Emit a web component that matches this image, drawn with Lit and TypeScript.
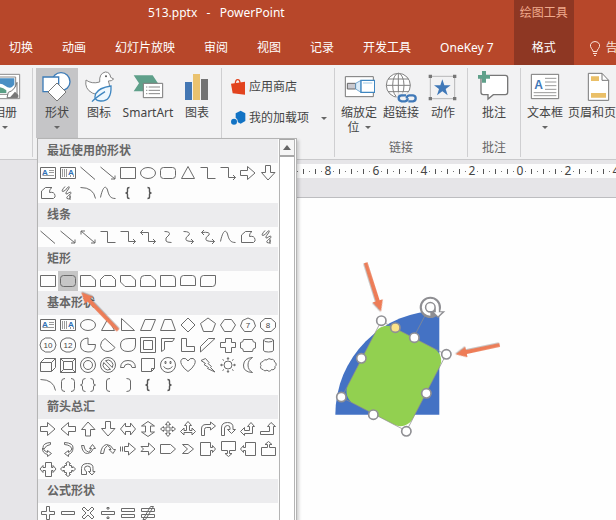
import { LitElement, html, css, svg, nothing } from "lit";
import type { TemplateResult, SVGTemplateResult } from "lit";
import { customElement } from "lit/decorators.js";
import { classMap } from "lit/directives/class-map.js";

type Glyph = string | SVGTemplateResult;
type Shape = [name: string, glyph: Glyph];

/* ---------- gallery glyphs, each drawn in a 20 x 20 cell ---------- */

const polygonText = (label: string, outline: string) => svg`
  <path d=${outline}></path>
  <text class="num" x="10" y="13" text-anchor="middle">${label}</text>`;

const textBox: Shape = ["文本框", svg`<path d="M2.5 4.5h15v11h-15z"></path>
  <path class="thin" d="M11 7.5h5M11 9.5h5M4.5 12.5h11.5"></path>
  <text class="letter" x="4" y="11.5">A</text>`];
const verticalTextBox: Shape = ["竖排文本框", svg`<path d="M2.5 4.5h15v11h-15z"></path>
  <path class="thin" d="M4.5 6v8M6.5 6v8M8.5 6v8M12.5 12v2M15.5 12v2"></path>
  <text class="letter" x="10" y="11.5">A</text>`];
const line: Shape = ["直线", "M2.5 4L17 16.5"];
const lineArrow: Shape = ["箭头", "M2.5 4L17 16M17 12.5V16H13"];
const lineDouble: Shape = ["双箭头", "M3 4L17 16M17 12.5V16H13M3 7.5V4H7"];
const rect: Shape = ["矩形", "M2.5 4.5h15v11h-15z"];
const ellipse: Shape = ["椭圆", "M10 4.5a7.5 5.5 0 1 1 0 11a7.5 5.5 0 1 1 0-11z"];
const roundRect: Shape = ["圆角矩形", "M5.5 4.5h9q3 0 3 3v5q0 3-3 3h-9q-3 0-3-3v-5q0-3 3-3z"];
const triangle: Shape = ["三角形", "M10 3.5L16.5 15.5H3.5z"];
const elbow: Shape = ["肘形连接符", "M2.5 4.5H9.5V15.5H17.5"];
const elbowArrow: Shape = ["肘形箭头连接符", "M2.5 4.5H10.5V14.5H17.5M15 12l2.5 2.5-2.5 2.5"];
const elbowDouble: Shape = ["肘形双箭头连接符", "M2.5 5.5H10.5V14.5H17.5M15 12l2.5 2.5-2.5 2.5M5 3L2.5 5.5 5 8"];
const rightArrow: Shape = ["右箭头", "M2.5 7.5H9.5V3.5L17 10 9.5 16.5V12.5H2.5z"];
const downArrow: Shape = ["下箭头", "M7.5 2.5V9.5H3.5L10 17 17 9.5H12.5V2.5z"];
const freeform: Shape = ["任意多边形", "M3.5 15.5V8L7.5 4.5H14Q11 6 11.5 9.5Q16.5 8.5 17 12.5V14L15.5 15.5z"];
const scribble: Shape = ["自由曲线", "M7 3.5Q2.5 8.5 5 8.5Q7.5 8 9.5 4.5Q12.5 2.5 10.5 6Q6 11.5 9 11Q13.5 7.5 13 10.5Q7.5 14.5 9 15.5Q13 17 12 12.5L12 17"];
const arc: Shape = ["弧形", "M2.5 4.5Q15.5 4.5 17.5 15.5"];
const curve: Shape = ["曲线", "M2.5 14.5C5 2.5 8 2.5 9.5 7C11 13 12.5 15.5 17.5 15.5"];
const leftBrace: Shape = ["左大括号", svg`<path class="heavy" d="M11.5 4.5Q9.5 4.5 9.5 6V8.5Q9.5 10 7.5 10Q9.5 10 9.5 11.5V14Q9.5 15.5 11.5 15.5"></path>`];
const rightBrace: Shape = ["右大括号", svg`<path class="heavy" d="M9.5 4.5Q11.5 4.5 11.5 6V8.5Q11.5 10 13.5 10Q11.5 10 11.5 11.5V14Q11.5 15.5 9.5 15.5"></path>`];

const groups: { title: string; active?: number; shapes: Shape[] }[] = [
  {
    title: "最近使用的形状",
    shapes: [
      textBox, verticalTextBox, line, lineArrow, rect, ellipse, roundRect, triangle,
      elbow, elbowArrow, rightArrow, downArrow,
      freeform, scribble, arc, curve, leftBrace, rightBrace,
    ],
  },
  {
    title: "线条",
    shapes: [
      line, lineArrow, lineDouble, elbow, elbowArrow, elbowDouble,
      ["曲线连接符", "M6.5 4.5Q13 4.5 11 8Q6.5 11 8 14Q9 15.5 13.5 15.5"],
      ["曲线箭头连接符", "M5.5 4.5Q13 4.5 11 8Q6.5 11 8.5 13.5Q10 14.5 15.5 14.5M13 12l2.5 2.5-2.5 2.5"],
      ["曲线双箭头连接符", "M3.5 5.5Q13 4.5 11 8Q6.5 11 8.5 13.5Q10 14.5 16.5 14.5M14 12l2.5 2.5-2.5 2.5M6 3L3.5 5.5 6 8"],
      curve, freeform, scribble,
    ],
  },
  {
    title: "矩形",
    active: 1,
    shapes: [
      rect,
      roundRect,
      ["剪去单角的矩形", "M2.5 4.5H13L17.5 9V15.5H2.5z"],
      ["剪去同侧角的矩形", "M6.5 4.5H13.5L17.5 8.5V15.5H2.5V8.5z"],
      ["剪去对角的矩形", "M2.5 4.5H13L17.5 9V15.5H7L2.5 11z"],
      ["一个圆顶角并剪去另一个顶角的矩形", "M6.5 4.5H13L17.5 9V15.5H2.5V8.5Q2.5 4.5 6.5 4.5z"],
      ["单圆角矩形", "M2.5 4.5H14.5Q17.5 4.5 17.5 8V15.5H2.5z"],
      ["同侧圆角矩形", "M5.5 4.5H14.5Q17.5 4.5 17.5 8V14.5H2.5V8Q2.5 4.5 5.5 4.5z"],
      ["对角圆角矩形", "M5.5 4.5H17.5V12Q17.5 15.5 14.5 15.5H2.5V8Q2.5 4.5 5.5 4.5z"],
    ],
  },
  {
    title: "基本形状",
    shapes: [
      textBox, verticalTextBox, ellipse, triangle,
      ["直角三角形", "M3.5 3.5V15.5H16.5z"],
      ["平行四边形", "M7 4.5H17.5L13 15.5H2.5z"],
      ["梯形", "M6.5 4.5H13.5L17.5 15.5H2.5z"],
      ["菱形", "M10 3L17 10 10 17 3 10z"],
      ["五边形", "M10 3L17.5 8.5 14.5 16.5H5.5L2.5 8.5z"],
      ["六边形", "M6.5 4.5H13.5L17.5 10 13.5 16.5H6.5L2.5 10z"],
      ["七边形", polygonText("7", "M10 3L15.5 5.5 17.5 11 13.5 16.5H6.5L2.5 11 4.5 5.5z")],
      ["八边形", polygonText("8", "M7 3.5H13L17.5 7.5V12.5L13 16.5H7L2.5 12.5V7.5z")],
      ["十边形", polygonText("10", "M7.5 3H12.5L16.5 5.5 18 10 16.5 14.5 12.5 17H7.5L3.5 14.5 2 10 3.5 5.5z")],
      ["十二边形", polygonText("12", "M8 3H12L16 5 17.5 8V12L16 15 12 17H8L4 15 2.5 12V8L4 5z")],
      ["饼形", "M10 3Q2.5 3.5 2.5 10T10 17T17.5 9.5H10z"],
      ["弦形", "M7 3.5Q2.5 6 2.5 10.5Q4 16.5 10 16.5Q15 16 17 12.5z"],
      ["泪滴形", "M17.5 3.5H11Q2.5 3.5 2.5 10T10 16.5T17.5 10z"],
      ["图文框", "M2.5 2.5h15v15h-15zM5.5 5.5h9v9h-9z"],
      ["半闭框", "M3.5 16.5V3.5H16.5L14.5 6.5H6.5V14.5z"],
      ["L 形", "M3.5 3.5H8.5V11.5H16.5V16.5H3.5z"],
      ["斜纹", "M2.5 11.5L10.5 3.5H17L2.5 17z"],
      ["十字形", "M7.5 3.5H13.5V7.5H17.5V12.5H13.5V17.5H7.5V12.5H2.5V7.5H7.5z"],
      ["缺角矩形", "M5.5 4.5H14.5Q14.5 7.5 17.5 7.5V13Q14.5 13 14.5 16.5H5.5Q5.5 13 2.5 13V7.5Q5.5 7.5 5.5 4.5z"],
      ["圆柱形", "M5.5 5Q5.5 3.5 10 3.5T15.5 5V15.5Q15 17 10.5 17T5.5 15.5zM5.5 5Q6 7 10.5 7T15.5 5"],
      ["立方体", "M2.5 7.5L6.5 3.5H17.5V12.5L13.5 16.5H2.5zM2.5 7.5H13.5V16.5M13.5 7.5L17.5 3.5"],
      ["棱台", "M2.5 3.5h15v14h-15zM5.5 6.5h9v8h-9zM2.5 3.5l3 3M17.5 3.5l-3 3M2.5 17.5l3-3M17.5 17.5l-3-3"],
      ["同心圆", "M10 2.5a7.5 7.5 0 1 1 0 15a7.5 7.5 0 1 1 0-15zM10 5.5a4.5 4.5 0 1 1 0 9a4.5 4.5 0 1 1 0-9z"],
      ["禁止符", "M10 2.5a7.5 7.5 0 1 1 0 15a7.5 7.5 0 1 1 0-15zM7.5 5.7a5 5 0 0 1 6.8 6.8zM5.7 7.5a5 5 0 0 0 6.8 6.8z"],
      ["空心弧", "M2.5 12.5Q3 5.5 10 5.5T17.5 12.5H14Q13.5 9 10 9T6 12.5z"],
      ["折角形", "M3.5 3.5H16.5V13.5L13.5 16.5H3.5zM13.5 16.5V13.5H16.5"],
      ["笑脸", "M10 2.5a7.5 7.5 0 1 1 0 15a7.5 7.5 0 1 1 0-15zM7 6.5h1v2h-1zM12 6.5h1v2h-1zM5.5 11.5Q10 16.5 14.5 11.5"],
      ["心形", "M10 6Q8 2.5 5 3.5Q1.5 5 3.5 9.5Q5.5 13.5 10 16.5Q14.5 13.5 16.5 9.5Q18.5 5 15 3.5Q12 2.5 10 6z"],
      ["闪电形", "M3 5.5L7.5 3.5 11 7.5 10 8.5 13.5 11.5 12.5 12.5 17 17 9.5 13.5 10.5 12.5 6 9.5 7.5 8.5z"],
      ["太阳形", "M10 6a4 4 0 1 1 0 8a4 4 0 1 1 0-8zM9 4L10 2.5 11 4zM9 16L10 17.5 11 16zM4 9L2.5 10 4 11zM16 9L17.5 10 16 11zM4.5 4.5l1.5 1M15.5 4.5l-1.5 1M4.5 15.5l1.5-1M15.5 15.5l-1.5-1"],
      ["新月形", "M14.5 2.5Q6 3 5.5 10T14.5 17.5Q10 15 10 10T14.5 2.5z"],
      ["云形", "M5 14.5A2.5 2.5 0 0 1 3 10.5A2.5 2.5 0 0 1 5 6.5A3 3 0 0 1 9 5A2.5 2.5 0 0 1 13 4.5A2.5 2.5 0 0 1 16.5 7A2.5 2.5 0 0 1 17 11.5A2.5 2.5 0 0 1 13.5 14.5A2.5 2.5 0 0 1 9 15A2.5 2.5 0 0 1 5 14.5z"],
      arc,
      ["双括号", "M7 3.5Q3.5 3.5 3.5 6.5V13.5Q3.5 16.5 7 16.5M13 3.5Q16.5 3.5 16.5 6.5V13.5Q16.5 16.5 13 16.5"],
      ["双大括号", "M7.5 3.5Q4.5 3.5 4.5 6V8Q4.5 10 2.5 10Q4.5 10 4.5 12V14Q4.5 16.5 7.5 16.5M12.5 3.5Q15.5 3.5 15.5 6V8Q15.5 10 17.5 10Q15.5 10 15.5 12V14Q15.5 16.5 12.5 16.5"],
      ["左中括号", "M12 3.5Q8.5 3.5 8.5 6V14Q8.5 16.5 12 16.5"],
      ["右中括号", "M8.5 3.5Q12.5 3.5 12.5 6V14Q12.5 16.5 8.5 16.5"],
      leftBrace,
      rightBrace,
    ],
  },
  {
    title: "箭头总汇",
    shapes: [
      rightArrow,
      ["左箭头", "M17.5 7.5H10.5V3.5L3 10 10.5 16.5V12.5H17.5z"],
      ["上箭头", "M7.5 17V10.5H3.5L10 3 17 10.5H12.5V17z"],
      downArrow,
      ["左右箭头", "M2.5 10L7.5 4V7.5H12.5V4L17.5 10 12.5 16V12.5H7.5V16z"],
      ["上下箭头", "M10 2.5L16.5 7H12.5V13H16.5L10 17.5 3.5 13H7.5V7H3.5z"],
      ["十字箭头", "M10 2.5L12.5 5.5H11V9H14.5V7.5L17.5 10 14.5 12.5V11H11V14.5H12.5L10 17.5 7.5 14.5H9V11H5.5V12.5L2.5 10 5.5 7.5V9H9V5.5H7.5z"],
      ["丁字箭头", "M10 2.5L13.5 6.5H11.5V11.5H14V9L17.5 12.5 14 16V13.5H6V16L2.5 12.5 6 9V11.5H8.5V6.5H6.5z"],
      ["圆角右箭头", "M3.5 16.5V10Q3.5 5.5 8 5.5H12.5V3L17.5 7 12.5 11V8.5H8.5Q6.5 8.5 6.5 10.5V16.5z"],
      ["手杖形箭头", "M3.5 16.5V9Q3.5 3.5 9.5 3.5T15 9V10.5H17.5L13.5 14.5 9.5 10.5H12V9Q12 6.5 9.5 6.5T6.5 9V16.5z"],
      ["直角双向箭头", "M2.5 12.5L6.5 8.5V11.5H11.5V7.5H9.5L13 3.5 16.5 7.5H14.5V14.5H6.5V16.5z"],
      ["直角上箭头", "M2.5 12.5H11.5V7.5H9.5L13 3.5 17.5 7.5H15.5V15.5H2.5z"],
      ["左弧形箭头", "M12.5 3.5Q5 4 5 8.5Q5 11.5 9.5 13.5V11.5L13.5 14.5 9.5 17.5V15.5Q4 14 4.5 9M12.5 3.5V5.5Q8 6 6 10"],
      ["右弧形箭头", "M6.5 3.5Q15.5 4 15 9Q15 14 10.5 15.5V17.5L6.5 14.5 10.5 11.5V13.5Q13.5 12 14 9.5M6.5 3.5V5.5Q12.5 6 14 10"],
      ["上弧形箭头", "M3.5 6.5Q4.5 14.5 9.5 14.5Q13.5 14.5 15.5 9.5H17.5L14.5 5.5 11.5 9.5H13.5Q12.5 12 10.5 13M3.5 6.5H6Q6.5 12 10.5 13"],
      ["下弧形箭头", "M2.5 14.5Q3.5 6.5 8.5 5.5Q13 5.5 15.5 10.5H17.5L15 14.5 11 10.5H13Q12 8 9.5 6.5M2.5 14.5H5.5Q6 8.5 9.5 6.5"],
      ["虚尾箭头", "M2.5 7.5V12.5M4.5 7.5V12.5M6.5 7.5H10.5V4L17.5 10 10.5 16V12.5H6.5z"],
      ["燕尾形箭头", "M3 7.5H10.5V4L17 10 10.5 16V12.5H3L5.5 10z"],
      ["五边形箭头", "M2.5 5.5H12.5L17.5 10 12.5 14.5H2.5z"],
      ["燕尾形", "M4.5 5.5H10L15.5 10 10 14.5H4.5L9.5 10z"],
      ["右箭头标注", "M2.5 3.5H12.5V8.5H14.5V6.5L17.5 10 14.5 13.5V11.5H12.5V16.5H2.5z"],
      ["下箭头标注", "M3.5 2.5H17.5V11.5H11.5V14.5H14L10.5 17.5 7 14.5H9.5V11.5H3.5z"],
      ["左箭头标注", "M17.5 3.5H7.5V8.5H5.5V6.5L2.5 10 5.5 13.5V11.5H7.5V16.5H17.5z"],
      ["上箭头标注", "M3.5 16.5H17.5V8.5H11.5V5.5H14L10.5 2.5 7 5.5H9.5V8.5H3.5z"],
      ["左右箭头标注", "M7.5 3.5H13.5V8.5H15V6.5L18 10 15 13.5V11.5H13.5V17.5H7.5V11.5H5V13.5L2 10 5 6.5V8.5H7.5z"],
      ["十字箭头标注", "M10 2.5L12.5 4.5H11.5V6.5H13.5V8.5H15V7.5L17.5 10 15 12.5V11.5H13.5V13.5H11.5V15.5H12.5L10 17.5 7.5 15.5H8.5V13.5H6.5V11.5H5V12.5L2.5 10 5 7.5V8.5H6.5V6.5H8.5V4.5H7.5z"],
      ["环形箭头", "M3.5 15.5V9.5Q3.5 4.5 9.5 4.5T15 9.5V12.5H17L14 16 10.5 12.5H12.5V9.5Q12.5 7 9.5 7T6.5 9.5Q6.5 12 8.5 12.5V15.5z"],
    ],
  },
  {
    title: "公式形状",
    shapes: [
      ["加号", "M8.5 3.5H11.5V8.5H16.5V11.5H11.5V16.5H8.5V11.5H3.5V8.5H8.5z"],
      ["减号", "M3.5 8.5H16.5V11.5H3.5z"],
      ["乘号", "M6 4L10 8 14 4 16 6 12 10 16 14 14 16 10 12 6 16 4 14 8 10 4 6z"],
      ["除号", "M3.5 8.5H16.5V11.5H3.5zM9 4.5h2v1.5h-2zM9 14h2v1.5h-2z"],
      ["等号", "M3.5 5.5H16.5V8.5H3.5zM3.5 11.5H16.5V14.5H3.5z"],
      ["不等号", "M3.5 5.5H16.5V8.5H3.5zM3.5 11.5H16.5V14.5H3.5zM12.5 3.5H15.5L7.5 16.5H5z"],
    ],
  },
];

/* Coral pointer arrow aimed along +x, tip at 0,0 */
const pointer = (x: number, y: number, angle: number, length: number) => svg`
  <g transform="translate(${x} ${y}) rotate(${angle})">
    <path class="pointer" d="M0 0L-33 -16V-6L${-length} -5V5L-33 6V16z"></path>
  </g>`;

@customElement("shape-gallery")
export class ShapeGallery extends LitElement {
  static styles = css`
    :host {
      display: flex;
      box-sizing: border-box;
      width: 260px;
      padding-right: 1px;
      border: 1px solid #b4b4b4;
      background: #fdfdfd;
      box-shadow: 2px 2px 3px rgb(0 0 0 / 18%);
      font: 12px/24px "Noto Sans", "Noto Sans CJK SC", sans-serif;
    }
    .list { flex: none; width: 240px; }
    h3 {
      margin: 0;
      height: 24px;
      padding-left: 9px;
      background: #ececee;
      color: #666;
      font-size: 12px;
      font-weight: 700;
    }
    .grid { display: grid; grid-template-columns: repeat(12, 20px); }
    .cell {
      display: block;
      width: 20px;
      height: 20px;
      padding: 0;
      border: 0;
      background: none;
    }
    .cell.active { background: #c6c6c6; }
    .cell svg { display: block; fill: none; stroke: #6a6a6a; stroke-width: 1; }
    .cell .thin { stroke: #9a9a9a; }
    .cell .heavy { stroke: #555; stroke-width: 1.4; }
    .cell text { stroke: none; }
    .letter { fill: #2f6fb3; font: bold 8px "Liberation Sans", sans-serif; }
    .num { fill: #444; font: 8px "Liberation Sans", sans-serif; }
    .bar { flex: 1; margin-left: 1px; border: solid #b4b4b4; border-width: 0 1px; background: #fff; }
    .up {
      display: grid;
      place-items: center;
      width: 100%;
      height: 18px;
      padding: 0;
      border: 1px solid #a8a8a8;
      border-width: 1px 0 2px;
      background: #f6f6f6;
    }
  `;

  private cell([name, glyph]: Shape, active: boolean): TemplateResult {
    return html`<button class=${classMap({ cell: true, active })} aria-label=${name} title=${name}>
      <svg width="20" height="20" viewBox="0 0 20 20">
        ${typeof glyph === "string" ? svg`<path d=${glyph}></path>` : glyph}
      </svg>
    </button>`;
  }

  render() {
    return html`
      <div class="list">
        ${groups.map(
          (g) => html`<h3>${g.title}</h3>
            <div class="grid">${g.shapes.map((s, i) => this.cell(s, i === g.active))}</div>`
        )}
      </div>
      <div class="bar">
        <button class="up" aria-label="向上滚动">
          <svg width="8" height="5" viewBox="0 0 8 5"><path d="M0 5L4 0 8 5z" fill="#666"></path></svg>
        </button>
      </div>`;
  }
}

/* ---------- ribbon icons, drawn on a 96-unit grid and shown at 32px ---------- */

const icons: Record<string, SVGTemplateResult> = {
  album: svg`<g stroke="#8a8a8a" stroke-width="3" fill="#fff">
      <path d="M12 10H92V83H12z"></path><path d="M4 18H80V70H4z"></path></g>
    <path d="M8 22H76V54L60 66H8z" fill="#4a8fc4"></path>
    <path d="M8 48Q30 30 48 44T76 40V66H8z" fill="#fff"></path>
    <path d="M8 56Q32 40 52 58V66H8z" fill="#5b9f86"></path>
    <path d="M54 80L58 64Q78 58 84 34V80z" fill="#fff" stroke="#777" stroke-width="3"></path>
    <path d="M62 80L78 62 88 72V80z" fill="#777"></path>`,
  shapes: svg`<g fill="#fff" stroke="#3d7cb8" stroke-width="4">
      <circle cx="60" cy="32" r="27"></circle><path d="M6 18H53V62H6z"></path></g>
    <path d="M48 36L75 63 48 90 21 63z" fill="#fff" stroke="#777" stroke-width="3"></path>`,
  duck: svg`<path d="M9 27Q26 40 50 33Q48 7 67 3Q81 3 83 19L92 24Q86 31 76 30Q84 50 74 60Q56 80 28 66Q4 54 9 27z"
      fill="#fff" stroke="#858585" stroke-width="3"></path>
    <circle cx="69" cy="16" r="3" fill="#555"></circle>
    <path d="M84 45Q86 92 52 90Q30 88 38 68Q48 50 84 45z" fill="#eef7fd" stroke="#3f86c0" stroke-width="4"></path>
    <path d="M27 92Q38 80 66 62" fill="none" stroke="#3f86c0" stroke-width="4"></path>`,
  smartart: svg`<path d="M5 13H62L78 37 62 61H5L21 37z" fill="#5fa08a"></path>
    <path d="M34 37H92V80H34z" fill="#fff" stroke="#777" stroke-width="3"></path>
    <path d="M42 48h4M42 58h4M42 68h4M50 48h34M50 58h34M50 68h34" stroke="#888" stroke-width="3"></path>`,
  chart: svg`<path d="M12 33H33V87H12z" fill="#4477b3"></path>
    <path d="M36 9H57V87H36z" fill="#eac26e"></path><path d="M60 24H81V87H60z" fill="#737373"></path>`,
  zoom: svg`<path d="M7 17H91V77H7z" fill="#fff" stroke="#777" stroke-width="3"></path>
    <path d="M13 37H38V54H13z" fill="#c9c9cf" stroke="#666" stroke-width="3"></path>
    <path d="M38 37L54 28V64L38 54z" fill="#dcecf8" stroke="#3f86c0" stroke-width="2"></path>
    <path d="M54 28H95V64H54z" fill="#fff" stroke="#3f86c0" stroke-width="4"></path>
    <path d="M60 36H88" stroke="#b9d6ec" stroke-width="4"></path>`,
  link: svg`<g fill="#fff" stroke="#808080" stroke-width="3">
      <circle cx="40" cy="43" r="36"></circle><ellipse cx="40" cy="43" rx="17" ry="36"></ellipse>
      <path d="M4 43H76M9 24H71M9 62H71M40 7V79" fill="none"></path></g>
    <path d="M34 64H96V96H34z" fill="#f1f1f2" opacity=".8"></path>
    <g fill="none" stroke="#4079b8" stroke-width="7">
      <path d="M63 73H50Q41 73 41 81T50 91H60Q68 90 68 82"></path>
      <path d="M70 91H84Q92 90 92 82T84 73H73Q65 74 65 82"></path></g>`,
  action: svg`<path d="M10 16H83V83H10z" fill="none" stroke="#999" stroke-width="2"></path>
    <path d="M5 11h10v10H5zM78 11h10v10H78zM5 78h10v10H5zM78 78h10v10H78z" fill="#777"></path>
    <path d="M46 25L52 43H71L56 54 62 73 46 61 30 73 36 54 21 43H40z" fill="#3f78b8"></path>`,
  comment: svg`<path d="M15 13H82Q89 13 89 20V64Q89 71 82 71H46L30 84V71H16Q9 71 9 64V20z"
      fill="#fff" stroke="#777" stroke-width="4"></path>
    <path d="M12 0H24V12H36V23H24V35H12V23H0V12H12z" fill="#5fa08a"></path>`,
  textbox: svg`<path d="M7 10H89V83H7z" fill="#fff" stroke="#777" stroke-width="3"></path>
    <path d="M48 22H82M48 33H82M48 44H82M48 55H82M14 65H82M14 74H82" stroke="#999" stroke-width="3"></path>
    <text x="16" y="53" class="icon-letter">A</text>`,
  header: svg`<path d="M19 7H60L80 28V88H19z" fill="#fff" stroke="#777" stroke-width="3"></path>
    <path d="M60 7V28H80" fill="none" stroke="#777" stroke-width="3"></path>
    <path d="M27 16H51V30H27zM27 66H72V80H27z" fill="#eabf67"></path>`,
};

const handles: [number, number][] = [
  [184, 212], [379, 313], [259, 544], [64, 441], [283, 263], [319, 430], [160, 494], [124, 325],
];

const ZERO_MARK = 240;
const MARK_STEP = 48;

@customElement("app-root")
export class AppRoot extends LitElement {
  static styles = css`
    :host {
      display: flex;
      flex-direction: column;
      height: 100vh;
      overflow: hidden;
      background: #e6e5e8;
      color: #444;
      font: 12px/16px "Noto Sans", "Noto Sans CJK SC", sans-serif;
    }
    button {
      padding: 0;
      border: 0;
      background: none;
      color: inherit;
      font: inherit;
      white-space: nowrap;
    }
    svg { display: block; flex: none; }
    header {
      display: flex;
      flex: none;
      height: 65px;
      background: #b7472a;
      color: #fff;
      white-space: nowrap;
    }
    .main-tabs { display: flex; flex: none; flex-direction: column; padding-right: 20px; }
    .title { margin: 0; padding: 5px 0 19px 148px; font-size: 12px; font-weight: 400; white-space: pre; }
    .tabs { display: flex; gap: 29px; padding-left: 9px; }
    .context { display: flex; flex: none; flex-direction: column; align-items: center; width: 60px; background: #8e3723; }
    .context span { padding: 5px 0 19px; color: #f0a98c; }
    .tell { display: flex; flex: none; gap: 4px; align-self: flex-end; padding: 0 0 9px 14px; color: #fbe3d8; }

    .ribbon {
      position: relative;
      z-index: 1;
      display: flex;
      flex: none;
      box-sizing: border-box;
      height: 95px;
      border-bottom: 1px solid #c9c9cb;
      background: #f2f2f3;
    }
    .group {
      display: flex;
      flex: none;
      flex-direction: column;
      justify-content: space-between;
      margin: 3px 0 2px;
      padding: 0 3px;
      border-right: 1px solid #cfcfd1;
    }
    .group.first { width: 26px; align-items: flex-end; padding: 0 6px 0 0; }
    .group.single { padding: 0 5px; }
    .group.last { border: 0; }
    .tools { display: flex; position: relative; }
    .tool {
      display: flex;
      flex-direction: column;
      align-items: center;
      box-sizing: border-box;
      min-width: 42px;
      height: 70px;
      padding: 3px 2px 0;
    }
    .tool.wide { min-width: 56px; }
    .tool.open { background: #c5c5c7; }
    .tool .text { padding-top: 2px; }
    .caret { display: block; margin: 5px auto 0; border: solid transparent; border-width: 3px 3px 0; border-top-color: #666; }
    .caret.inline { display: inline-block; margin: 0 0 3px 5px; }
    .two { line-height: 15px; white-space: normal; width: 36px; }
    .caption { text-align: center; padding-bottom: 1px; color: #666; }
    .addins { display: flex; flex-direction: column; gap: 15px; width: 96px; padding: 11px 4px 0 6px; }
    .addin { display: flex; align-items: center; gap: 3px; }
    .addin .caret { margin: 0 0 0 auto; }
    shape-gallery { position: absolute; top: 100%; left: 1px; }
    .aim { position: absolute; top: 220px; left: 40px; overflow: visible; pointer-events: none; }
    .icon-letter { fill: #3f78b8; font: bold 36px "Liberation Sans", sans-serif; }

    .ruler { flex: none; height: 14px; margin: 4px 0 19px 280px; background: #fdfdfd; overflow: hidden; }
    .ruler text { fill: #444; font: 12px "Noto Sans", sans-serif; text-anchor: middle; }
    .slide { flex: 1; margin-left: 250px; padding: 52px 0 0 70px; border-top: 1px solid #bdbdc0; background: #fefefe; }
    .pointer { fill: #ee7c56; filter: drop-shadow(1px 2px 1px rgb(0 0 0 / 35%)); }
    .handle { fill: #fff; stroke: #909094; stroke-width: 5; }
    .handle.adjust { fill: #fbe38a; }
  `;

  private tool(
    icon: string,
    label: string | TemplateResult,
    opts: { caret?: boolean; open?: boolean; wide?: boolean } = {}
  ) {
    return html`<button
      class=${classMap({ tool: true, open: !!opts.open, wide: !!opts.wide })}
      aria-expanded=${opts.open ? "true" : nothing}
    >
      <svg width="32" height="32" viewBox="0 0 96 96">${icons[icon]}</svg>
      <span class="text">${label}</span>
      ${opts.caret ? html`<i class="caret"></i>` : nothing}
    </button>`;
  }

  private ruler() {
    const marks: SVGTemplateResult[] = [];
    for (let x = 0; x <= 2400; x += 6) {
      const offset = x - ZERO_MARK;
      if (offset % MARK_STEP === 0) {
        marks.push(svg`<text x=${x} y="11">${(Math.abs(offset) / MARK_STEP) * 2}</text>`);
      } else if (offset % 12 === 0) {
        marks.push(svg`<path d="M${x - 1} 5h1v5h-1z" fill="#555"></path>`);
      } else {
        marks.push(svg`<path d="M${x - 1} 7h1v1h-1z" fill="#777"></path>`);
      }
    }
    return html`<div class="ruler"><svg width="2400" height="14" viewBox="0 0 2400 14">${marks}</svg></div>`;
  }

  render() {
    const tabs = ["切换", "动画", "幻灯片放映", "审阅", "视图", "记录", "开发工具", "OneKey 7"];
    return html`
      <header>
        <div class="main-tabs">
          <h1 class="title">513.pptx   -   PowerPoint</h1>
          <nav class="tabs">${tabs.map((t) => html`<button>${t}</button>`)}</nav>
        </div>
        <div class="context"><span>绘图工具</span><button>格式</button></div>
        <button class="tell">
          <svg width="14" height="16" viewBox="0 0 14 16" fill="none" stroke="#fbe3d8">
            <path d="M5 11.5Q5 10 3.5 8.5Q2 6.5 2.5 4.5Q3.5 1.5 7 1.5T11.5 4.5Q12 6.5 10.5 8.5Q9 10 9 11.5zM5 13.5H9M6 15.5H8"></path>
          </svg>
          <span>告诉我</span>
        </button>
      </header>

      <div class="ribbon">
        <div class="group first"><div class="tools">${this.tool("album", "相册", { caret: true })}</div></div>
        <div class="group">
          <div class="tools">
            ${this.tool("shapes", "形状", { caret: true, open: true })}
            ${this.tool("duck", "图标")}
            ${this.tool("smartart", "SmartArt", { wide: true })}
            ${this.tool("chart", "图表")}
            <shape-gallery></shape-gallery>
            <svg class="aim" width="50" height="50" viewBox="0 0 150 150">${pointer(16, 13, -134, 158)}</svg>
          </div>
        </div>
        <div class="group">
          <div class="addins">
            <button class="addin">
              <svg width="15" height="16" viewBox="0 0 45 48">
                <path d="M0 14L42 8V47L5 43z" fill="#e2431e"></path>
                <path d="M13 15Q13 2 20 2T27 13" fill="none" stroke="#e2431e" stroke-width="4"></path>
              </svg>
              <span>应用商店</span>
            </button>
            <button class="addin">
              <svg width="15" height="16" viewBox="0 0 45 48">
                <path d="M14 10L29 2 43 10V33L29 41 14 33z" fill="#1273c4"></path>
                <circle cx="9" cy="34" r="11" fill="#f2f2f3"></circle>
                <circle cx="9" cy="35" r="9" fill="#1273c4"></circle>
              </svg>
              <span>我的加载项</span><i class="caret"></i>
            </button>
          </div>
        </div>
        <div class="group">
          <div class="tools">
            ${this.tool("zoom", html`<div class="two">缩放定位<i class="caret inline"></i></div>`)}
            ${this.tool("link", "超链接")}
            ${this.tool("action", "动作")}
          </div>
          <div class="caption">链接</div>
        </div>
        <div class="group single">
          <div class="tools">${this.tool("comment", "批注")}</div>
          <div class="caption">批注</div>
        </div>
        <div class="group last">
          <div class="tools">
            ${this.tool("textbox", "文本框", { caret: true })}
            ${this.tool("header", "页眉和页脚")}
          </div>
        </div>
      </div>

      ${this.ruler()}

      <main class="slide">
        <svg width="190" height="200" viewBox="0 0 570 600" role="img" aria-label="扇形与圆角矩形">
          <path d="M46 494A312 312 0 0 1 358 182V494z" fill="#4472c4"></path>
          <g transform="rotate(27.4 221.5 378)">
            <rect x="112" y="249" width="219" height="258" rx="42" fill="#92d050"></rect>
            <path d="M112 249H331V507H112zM221 249V160" fill="none" stroke="#8c8c8c" stroke-width="2"></path>
          </g>
          <circle cx="331" cy="172" r="22" fill="none" stroke="#8e8e92" stroke-width="20"></circle>
          <path d="M334 184H376L354 204z" fill="#8e8e92"></path>
          <path d="M331 193A21 21 0 1 1 352 172V188" fill="none" stroke="#fff" stroke-width="9"></path>
          <path d="M342 187H366L354 199z" fill="#fff"></path>
          ${handles.map(([x, y]) => svg`<circle class="handle" cx=${x} cy=${y} r="14"></circle>`)}
          <circle class="handle adjust" cx="226" cy="233" r="14"></circle>
          ${pointer(183, 184, 72.5, 153)}
          ${pointer(407, 313, 168, 135)}
        </svg>
      </main>`;
  }
}
